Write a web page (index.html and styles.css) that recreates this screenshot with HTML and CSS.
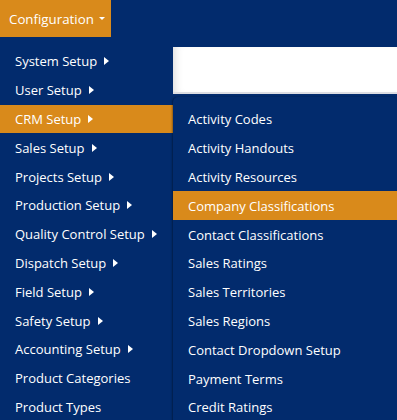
FILE: index.html
```html
<!DOCTYPE html>
<html lang="en">
<head>
  <meta charset="UTF-8">
  <title>Configuration menu</title>
  <link rel="stylesheet" href="styles.css">
</head>
<body>
  <div class="topbar">
    <button class="config-btn">Configuration <span class="caret"></span></button>
  </div>

  <div class="menus">
    <ul class="menu main-menu">
      <li>System Setup <span class="arrow"></span></li>
      <li>User Setup <span class="arrow"></span></li>
      <li class="active">CRM Setup <span class="arrow"></span></li>
      <li>Sales Setup <span class="arrow"></span></li>
      <li>Projects Setup <span class="arrow"></span></li>
      <li>Production Setup <span class="arrow"></span></li>
      <li>Quality Control Setup <span class="arrow"></span></li>
      <li>Dispatch Setup <span class="arrow"></span></li>
      <li>Field Setup <span class="arrow"></span></li>
      <li>Safety Setup <span class="arrow"></span></li>
      <li>Accounting Setup <span class="arrow"></span></li>
      <li>Product Categories</li>
      <li>Product Types</li>
    </ul>

    <div class="side">
      <div class="page-panel"></div>
      <ul class="menu sub-menu">
        <li>Activity Codes</li>
        <li>Activity Handouts</li>
        <li>Activity Resources</li>
        <li class="active">Company Classifications</li>
        <li>Contact Classifications</li>
        <li>Sales Ratings</li>
        <li>Sales Territories</li>
        <li>Sales Regions</li>
        <li>Contact Dropdown Setup</li>
        <li>Payment Terms</li>
        <li>Credit Ratings</li>
      </ul>
    </div>
  </div>
</body>
</html>
```

FILE: styles.css
```css
html, body {
  margin: 0;
  height: 100%;
  overflow: hidden;
}
body {
  background: #022b6d;
  color: #fff;
  font-family: "Open Sans", "Noto Sans", sans-serif;
  font-size: 13px;
}
.topbar {
  height: 37px;
}
.config-btn {
  height: 37px;
  width: 111px;
  border: none;
  background: #d98a1b;
  color: #fff;
  font-family: inherit;
  font-size: 13.3px;
  padding: 0 0 0 9px;
  text-align: left;
  display: flex;
  align-items: center;
  gap: 5px;
  cursor: pointer;
}
.caret {
  width: 0;
  height: 0;
  border-left: 3px solid transparent;
  border-right: 3px solid transparent;
  border-top: 3px solid #fff;
}
.menus {
  display: flex;
}
.menu {
  list-style: none;
  margin: 0;
  padding: 0;
}
.menu li {
  height: 28.8px;
  display: flex;
  align-items: center;
  gap: 7px;
  padding-left: 15px;
  white-space: nowrap;
  cursor: pointer;
}
.menu li.active {
  background: #d98a1b;
}
.arrow {
  width: 0;
  height: 0;
  border-top: 4px solid transparent;
  border-bottom: 4px solid transparent;
  border-left: 5px solid #fff;
}
.main-menu {
  width: 173px;
  padding-top: 10px;
}
.side {
  flex: 1;
  display: flex;
  flex-direction: column;
  padding-top: 10px;
}
.page-panel {
  height: 45px;
  background: #fff;
  border-bottom: 2px solid #dcdde2;
  box-shadow: inset 8px 0 8px -6px rgba(0, 0, 0, 0.15);
  margin-bottom: 3px;
}
.sub-menu {
  flex: 1;
  background: #022b6d;
  border-radius: 5px 5px 0 0;
  padding-top: 8px;
  box-shadow: -1px 0 2px rgba(0, 0, 0, 0.35);
}
```
